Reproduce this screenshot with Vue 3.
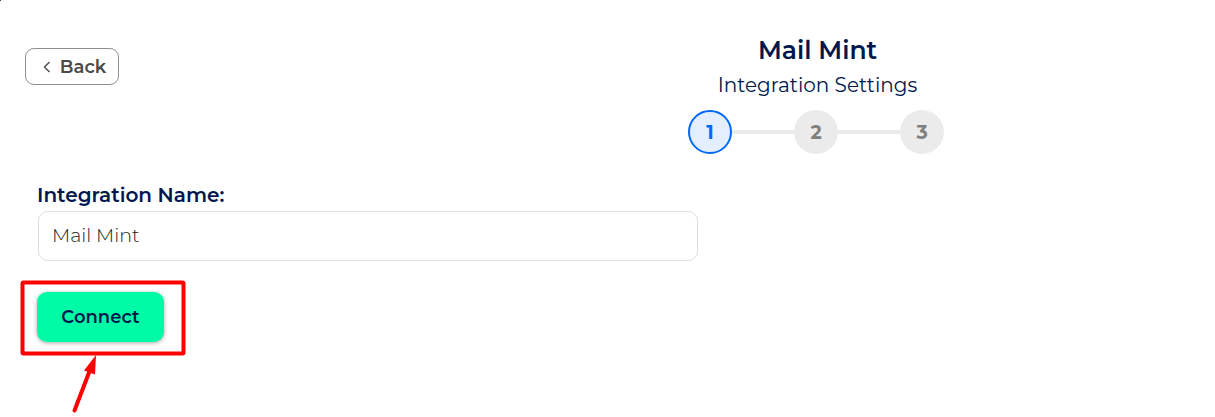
<script setup>
import { ref } from 'vue'

const name = ref('Mail Mint')
const steps = [1, 2, 3]
const current = 1
</script>

<template>
  <main class="page">
    <i class="corner" aria-hidden="true"></i>
    <header class="header">
      <div>
        <button type="button" class="back">
          <svg width="8" height="12" viewBox="0 0 8 12" aria-hidden="true">
            <path d="M6.5 1 1.5 6l5 5" fill="none" stroke="currentColor" stroke-width="1.4" />
          </svg>
          Back
        </button>
      </div>
      <div class="heading">
        <h1>Mail Mint</h1>
        <p>Integration Settings</p>
        <ol class="steps">
          <li v-for="step in steps" :key="step" :class="{ active: step === current }">
            <span>{{ step }}</span>
          </li>
        </ol>
      </div>
    </header>

    <form class="form" @submit.prevent>
      <label for="integration-name">Integration Name:</label>
      <input id="integration-name" v-model="name" type="text" />
      <div class="action">
        <button type="submit" class="connect">Connect</button>
        <svg class="callout" width="170" height="136" viewBox="0 0 170 136" aria-hidden="true">
          <rect x="5.5" y="4.5" width="161" height="71" rx="1" fill="none" stroke="#f00" stroke-width="4" />
          <path d="M57.5 132.5 73 92" stroke="#f00" stroke-width="4" stroke-linecap="round" />
          <path d="M79 77 67 92.5 78 96.5z" fill="#f00" />
        </svg>
      </div>
    </form>
  </main>
</template>

<style>
body {
  margin: 0;
  background: #fff;
}
</style>

<style scoped>
.page {
  position: relative;
  box-sizing: border-box;
  padding-top: 34px;
  padding-bottom: 75px;
  font-family: Montserrat, Inter, "Open Sans", sans-serif;
  color: #00174d;
}

.corner {
  position: absolute;
  top: 0;
  left: 0;
  width: 1px;
  height: 1px;
  background: #3c4763;
}

.header {
  display: grid;
  grid-template-columns: 420px 1fr;
}

.back {
  display: flex;
  align-items: center;
  justify-content: center;
  gap: 9px;
  box-sizing: border-box;
  width: 94px;
  height: 37px;
  margin: 14px 0 0 25px;
  padding: 0 0 0 5px;
  border: 1px solid #8f8f8f;
  border-radius: 9px;
  background: #fff;
  color: #4a4a4a;
  font: inherit;
  font-size: 18px;
  font-weight: 600;
}

.heading {
  display: flex;
  flex-direction: column;
  align-items: center;
}

h1 {
  margin: 0;
  font-size: 25px;
  line-height: 32px;
  font-weight: 600;
}

.heading p {
  margin: 6px 0 0;
  font-size: 20px;
  line-height: 26px;
  font-weight: 400;
}

.steps {
  display: flex;
  margin: 12px 0 0;
  padding: 0 3px 0 0;
  list-style: none;
}

.steps li {
  display: flex;
  align-items: center;
}

.steps li + li::before {
  content: "";
  width: 62px;
  height: 4px;
  background: #ebebeb;
}

.steps span {
  display: flex;
  align-items: center;
  justify-content: center;
  box-sizing: border-box;
  width: 44px;
  height: 44px;
  border-radius: 50%;
  background: #ebebeb;
  color: #808080;
  font-size: 19px;
  font-weight: 700;
}

.steps .active span {
  border: 2px solid #006aff;
  background: #e3efff;
  color: #006aff;
}

.form {
  display: flex;
  flex-direction: column;
  align-items: flex-start;
  padding: 28px 37px 0;
}

label {
  font-size: 20px;
  line-height: 26px;
  font-weight: 600;
}

input {
  box-sizing: border-box;
  width: 660px;
  max-width: 100%;
  height: 50px;
  margin: 3px 0 0 1px;
  padding: 0 13px 2px;
  border: 1px solid #dedede;
  border-radius: 10px;
  outline: none;
  background: #fff;
  color: #222;
  font: inherit;
  font-size: 19px;
  font-weight: 300;
}

.action {
  position: relative;
  margin-top: 31px;
}

.connect {
  display: block;
  width: 127px;
  height: 50px;
  padding: 0;
  border: 0;
  border-radius: 10px;
  background: #00fba7;
  box-shadow: 0 1px 4px rgba(0, 0, 0, 0.35);
  color: #00174d;
  font: inherit;
  font-size: 18px;
  font-weight: 600;
}

.callout {
  position: absolute;
  top: -14px;
  left: -20px;
  pointer-events: none;
}
</style>
